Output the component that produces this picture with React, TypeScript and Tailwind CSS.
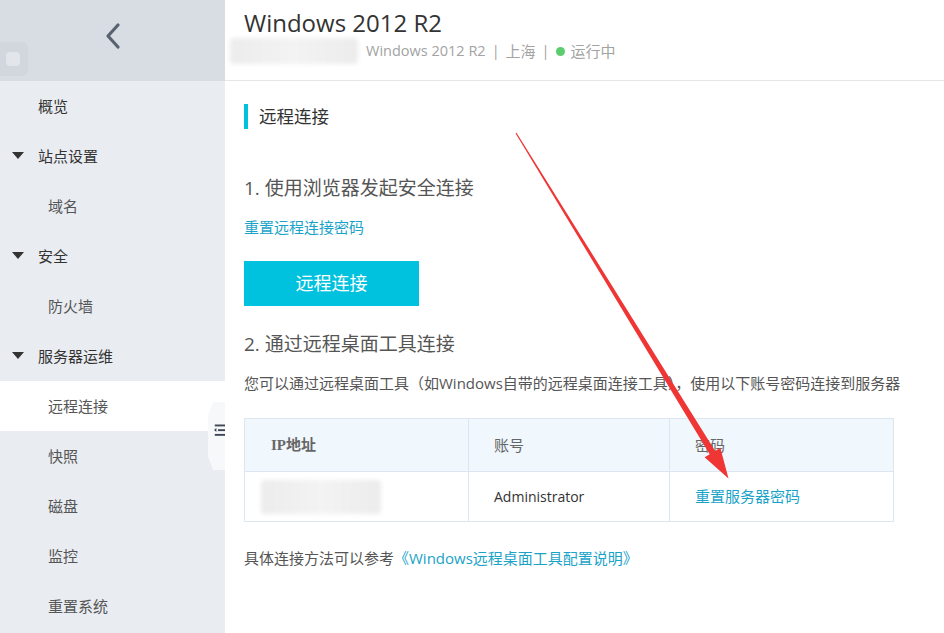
import React from "react";

const font = { fontFamily: '"Open Sans", "Noto Sans CJK SC", sans-serif' };

type NavItem = { label: string; level: 0 | 1 | 2; active?: boolean };

const nav: NavItem[] = [
  { label: "概览", level: 0 },
  { label: "站点设置", level: 1 },
  { label: "域名", level: 2 },
  { label: "安全", level: 1 },
  { label: "防火墙", level: 2 },
  { label: "服务器运维", level: 1 },
  { label: "远程连接", level: 2, active: true },
  { label: "快照", level: 2 },
  { label: "磁盘", level: 2 },
  { label: "监控", level: 2 },
  { label: "重置系统", level: 2 },
];

const Caret = () => (
  <svg width="12" height="8" viewBox="0 0 12 8" className="mr-[14px]">
    <path d="M0 0h12L6 7z" fill="#333" />
  </svg>
);

function Sidebar() {
  return (
    <aside className="w-[225px] shrink-0 bg-[#e9ecf1] flex flex-col h-[633px] relative">
      <div className="h-[81px] bg-[#d8dce3] flex items-center justify-center relative">
        <div className="absolute left-0 top-[42px] w-[28px] h-[34px] rounded-r-md bg-[#d2d6dd] flex items-center justify-center">
          <div className="w-[14px] h-[14px] rounded-sm bg-[#e2e5ea] ml-[-2px]" />
        </div>
        <svg width="20" height="28" viewBox="0 0 20 28" className="mt-[-10px]">
          <path d="M15 3L5 14l10 11" stroke="#5a6270" strokeWidth="3.2" fill="none" strokeLinecap="round" strokeLinejoin="round" />
        </svg>
      </div>
      {nav.map((n) => (
        <div
          key={n.label}
          className={`h-[50px] flex items-center text-[15px] ${n.active ? "bg-white" : ""} ${
            n.level === 1 ? "pl-[12px] text-[#333]" : n.level === 0 ? "pl-[38px] text-[#333]" : "pl-[48px] text-[#555]"
          }`}
        >
          {n.level === 1 && <Caret />}
          {n.label}
        </div>
      ))}
      <div className="absolute right-0 top-[402px] w-[17px] h-[68px] bg-[#f7f8fa] flex items-start justify-center pt-[20px] [clip-path:polygon(30%_0,100%_0,100%_100%,30%_100%,0_80%,0_20%)]">
        <svg width="14" height="16" viewBox="0 0 14 16" className="ml-[6px]">
          <rect x="1" y="1" width="13" height="2.4" fill="#3e4656" />
          <rect x="5" y="7" width="9" height="2.4" fill="#3e4656" />
          <path d="M0 8l3-2.5v5z" fill="#3e4656" />
          <rect x="1" y="13" width="13" height="2.4" fill="#3e4656" />
        </svg>
      </div>
    </aside>
  );
}

const Blur = ({ className }: { className: string }) => (
  <span className={`inline-block rounded-sm bg-gradient-to-r from-[#ececec] via-[#f3f3f3] to-[#ececec] blur-[2px] ${className}`} />
);

function Main() {
  return (
    <main className="flex-1 bg-white relative">
      <header className="h-[81px] border-b border-[#e6e6e6] pl-[19px] pt-[6px]">
        <h1 className="text-[24px] leading-[34px] text-[#333]">Windows 2012 R2</h1>
        <div className="flex items-center text-[14.5px] text-[#a3a3a3] mt-[-2px] ml-[-14px]">
          <Blur className="w-[128px] h-[26px] mr-[8px]" />
          <span>Windows 2012 R2</span>
          <span className="mx-[6px]">|</span>
          <span className="text-[15px]">上海</span>
          <span className="mx-[6px]">|</span>
          <span className="w-[9px] h-[9px] rounded-full bg-[#5ccd6e] mr-[6px]" />
          <span className="text-[15px]">运行中</span>
        </div>
      </header>

      <div className="pl-[19px] pt-[23px]">
        <div className="flex items-center h-[25px]">
          <span className="w-[4px] h-[25px] bg-[#00c1de] mr-[11px]" />
          <span className="text-[17.5px] text-[#333]">远程连接</span>
        </div>

        <div className="mt-[47px] text-[19px] text-[#555] leading-[24px]">1. 使用浏览器发起安全连接</div>
        <div className="mt-[17px] text-[15px] text-[#1aa3c8] leading-[20px]">重置远程连接密码</div>
        <button className="mt-[24px] w-[175px] h-[45px] bg-[#00c1de] text-white text-[18px]">远程连接</button>

        <div className="mt-[26px] text-[19px] text-[#555] leading-[24px]">2. 通过远程桌面工具连接</div>
        <div className="mt-[17px] text-[15px] text-[#555] leading-[20px]">
          您可以通过远程桌面工具（如Windows自带的远程桌面连接工具），使用以下账号密码连接到服务器
        </div>

        <div className="mt-[25px] w-[650px] border border-[#dbe6f1] text-[15px]">
          <div className="grid grid-cols-[223px_201px_1fr] h-[53px] bg-[#f0f7fd] border-b border-[#dbe6f1] text-[#666]">
            <div className="flex items-center pl-[26px] font-bold" style={{ fontFamily: '"Liberation Serif", "Noto Sans CJK SC", serif' }}>IP地址</div>
            <div className="flex items-center pl-[25px] border-l border-[#dbe6f1]">账号</div>
            <div className="flex items-center pl-[25px] border-l border-[#dbe6f1]">密码</div>
          </div>
          <div className="grid grid-cols-[223px_201px_1fr] h-[49px] text-[#333]">
            <div className="flex items-center pl-[16px]">
              <Blur className="w-[120px] h-[34px]" />
            </div>
            <div className="flex items-center pl-[25px] border-l border-[#dbe6f1] text-[14px]">Administrator</div>
            <div className="flex items-center pl-[25px] border-l border-[#dbe6f1] text-[#1aa3c8]">重置服务器密码</div>
          </div>
        </div>

        <div className="mt-[25px] text-[15px] text-[#555]">
          具体连接方法可以参考<span className="text-[#1aa3c8]">《Windows远程桌面工具配置说明》</span>
        </div>
      </div>
    </main>
  );
}

export default function App() {
  return (
    <div className="w-[944px] h-[633px] overflow-hidden flex relative" style={font}>
      <Sidebar />
      <Main />
      <svg className="absolute left-0 top-0 pointer-events-none" width="944" height="633">
        <polygon
          points="515.5,133.3 516.5,132.7 715.2,451 720.3,447.7 728.5,478.5 704.6,457.3 709.7,454.3"
          fill="#f03535"
        />
      </svg>
    </div>
  );
}
